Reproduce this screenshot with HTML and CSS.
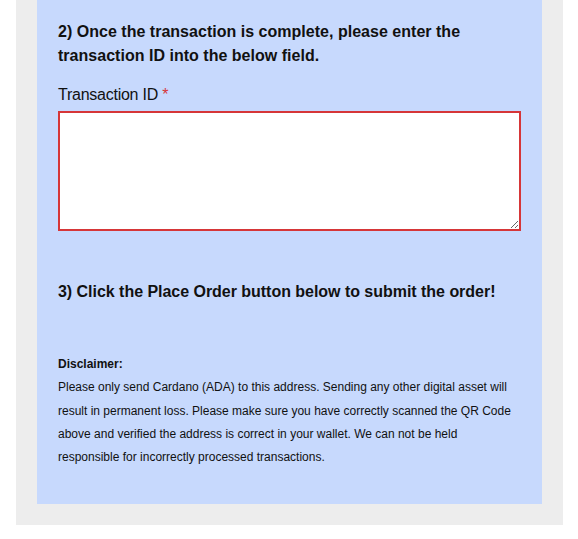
FILE: index.html
```html
<!DOCTYPE html>
<html>
<head>
<meta charset="utf-8">
<link rel="stylesheet" href="styles.css">
</head>
<body>
<div class="outer">
  <div class="panel">
    <h3 class="step">2) Once the transaction is complete, please enter the transaction ID into the below field.</h3>
    <label class="field-label" for="txid">Transaction ID <span class="req">*</span></label>
    <textarea id="txid" class="txid"></textarea>
    <h3 class="step step3">3) Click the Place Order button below to submit the order!</h3>
    <p class="disclaimer"><strong>Disclaimer:</strong><br>Please only send Cardano (ADA) to this address. Sending any other digital asset will result in permanent loss. Please make sure you have correctly scanned the QR Code above and verified the address is correct in your wallet. We can not be held responsible for incorrectly processed transactions.</p>
  </div>
</div>
</body>
</html>
```
FILE: styles.css
```css
html, body {
  margin: 0;
  padding: 0;
  background: #ffffff;
  font-family: "Liberation Sans", Arial, sans-serif;
  color: #111111;
}
.outer {
  margin-left: 16px;
  width: 547px;
  box-sizing: border-box;
  background: #ededed;
  padding: 0 21px 21px 21px;
}
.panel {
  background: #c7d9fd;
  padding: 20px 21px 35px 21px;
  display: flex;
  flex-direction: column;
}
.step {
  margin: 0;
  font-size: 16px;
  line-height: 24px;
  font-weight: bold;
  letter-spacing: 0.02px;
}
.field-label {
  margin-top: 15px;
  font-size: 16px;
  line-height: 24px;
  letter-spacing: -0.25px;
}
.req {
  color: #d63638;
}
.txid {
  margin-top: 4px;
  box-sizing: border-box;
  width: 463px;
  height: 120px;
  border: 2px solid #d63638;
  background: #ffffff;
  padding: 6px;
  font-family: inherit;
  outline: none;
}
.step3 {
  margin-top: 49px;
  letter-spacing: -0.03px;
}
.disclaimer {
  margin: 49px 0 0 0;
  font-size: 12px;
  line-height: 23.3px;
}
```
